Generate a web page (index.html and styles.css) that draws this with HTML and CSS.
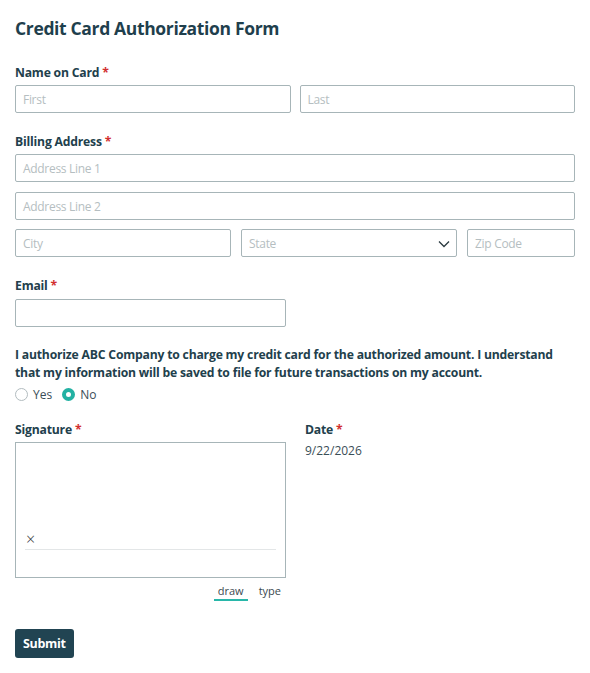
FILE: index.html
```html
<!DOCTYPE html>
<html lang="en">
<head>
<meta charset="utf-8">
<title>Credit Card Authorization Form</title>
<link rel="stylesheet" href="styles.css">
</head>
<body>
<form class="form">
  <h1 class="title">Credit Card Authorization Form</h1>

  <div class="field">
    <div class="label">Name on Card <span class="req">*</span></div>
    <div class="row two">
      <div class="input"><span class="ph">First</span></div>
      <div class="input"><span class="ph">Last</span></div>
    </div>
  </div>

  <div class="field">
    <div class="label">Billing Address <span class="req">*</span></div>
    <div class="stack">
      <div class="input"><span class="ph">Address Line 1</span></div>
      <div class="input"><span class="ph">Address Line 2</span></div>
      <div class="row three">
        <div class="input"><span class="ph">City</span></div>
        <div class="input select"><span class="ph">State</span>
          <svg class="chev" width="12" height="8" viewBox="0 0 12 8"><path d="M1 1.5 L6 6.5 L11 1.5" fill="none" stroke="#2b3a40" stroke-width="1.3"/></svg>
        </div>
        <div class="input"><span class="ph">Zip Code</span></div>
      </div>
    </div>
  </div>

  <div class="field email-field">
    <div class="label">Email <span class="req">*</span></div>
    <div class="input email"></div>
  </div>

  <div class="field consent">
    <div class="label para">I authorize ABC Company to charge my credit card for the authorized amount. I understand that my information will be saved to file for future transactions on my account.</div>
    <div class="radios">
      <span class="radio"><span class="dot"></span>Yes</span>
      <span class="radio"><span class="dot on"></span>No</span>
    </div>
  </div>

  <div class="sigrow">
    <div class="sigcol">
      <div class="label">Signature <span class="req">*</span></div>
      <div class="sigbox">
        <div class="sigline"><span class="x">×</span></div>
      </div>
      <div class="tabs">
        <span class="tab active">draw</span>
        <span class="tab">type</span>
      </div>
    </div>
    <div class="datecol">
      <div class="label">Date <span class="req">*</span></div>
      <div class="date">9/22/2026</div>
    </div>
  </div>

  <button type="button" class="submit">Submit</button>
</form>
</body>
</html>
```

FILE: styles.css
```css
* { box-sizing: border-box; }
html, body { margin: 0; padding: 0; background: #fff; }
body {
  font-family: "Open Sans", "Noto Sans", "DejaVu Sans", sans-serif;
  color: #24404c;
  font-size: 12px;
}
.form {
  width: 590px;
  padding: 15px 15px 0 15px;
}
.title {
  margin: 0 0 23px 0;
  font-size: 17.5px;
  line-height: 26px;
  font-weight: 700;
  color: #1f3f4d;
  letter-spacing: -0.35px;
}
.field { margin-bottom: 20px; }
.label {
  font-size: 12.2px;
  font-weight: 700;
  line-height: 18px;
  color: #22404c;
  margin-bottom: 3px;
  letter-spacing: -0.2px;
}
.email-field { margin-bottom: 19px; }
.email-field .label { margin-bottom: 4px; }
.req { color: #d22f2f; }
.row { display: flex; }
.row.two { gap: 9px; }
.row.two .input { flex: 1; }
.row.three { gap: 10px; }
.row.three .input { width: 216px; }
.row.three .input:last-child { width: 108px; }
.stack { display: flex; flex-direction: column; gap: 9px; }
.stack > .input:first-child { margin-bottom: 1px; }
.input {
  height: 28px;
  border: 1px solid #a7b5b8;
  border-radius: 2px;
  padding: 0 7px;
  display: flex;
  align-items: center;
  background: #fff;
}
.ph { color: #b5bec1; font-size: 12px; letter-spacing: -0.3px; }
.select { justify-content: space-between; padding-right: 6px; }
.chev { display: block; margin-top: 2px; }
.email { width: 271px; }
.consent { margin-bottom: 18px; }
.para { line-height: 18px; margin-bottom: 4px; }
.radios { display: flex; gap: 10px; align-items: center; font-size: 12px; color: #3a4e57; }
.radio { display: flex; align-items: center; gap: 5px; }
.dot {
  width: 13px; height: 13px; border-radius: 50%;
  border: 1px solid #b2bcbf; background: #fff;
  display: inline-block;
}
.dot.on { border: 4px solid #23b1a3; }
.sigrow { display: flex; gap: 19px; }
.sigcol { width: 271px; }
.sigbox {
  height: 136px;
  border: 1px solid #a7b5b8;
  display: flex;
  flex-direction: column;
  justify-content: flex-end;
  padding: 0 9px 27px 9px;
}
.sigline {
  border-bottom: 1px solid #e3e6e7;
  height: 17px;
  display: flex; align-items: flex-start;
}
.x { font-size: 16px; line-height: 12px; color: #333; padding-left: 1px; font-weight: 300; }
.tabs { display: flex; justify-content: flex-end; gap: 11px; margin-top: 6px; padding-right: 5px; font-size: 11px; color: #3b4a50; }
.tab { padding: 0 0 1px; line-height: 14px; }
.tab.active { border-bottom: 2px solid #28b7a9; padding: 0 4px 1px; }
.date { font-size: 12px; color: #3a4e57; line-height: 18px; margin-top: 2px; }
.submit {
  margin-top: 28px;
  font-family: inherit;
  background: #214452;
  color: #fff;
  border: none;
  border-radius: 3px;
  height: 29px;
  padding: 0 8px;
  font-size: 12.5px;
  font-weight: 700;
  letter-spacing: -0.3px;
}
```
